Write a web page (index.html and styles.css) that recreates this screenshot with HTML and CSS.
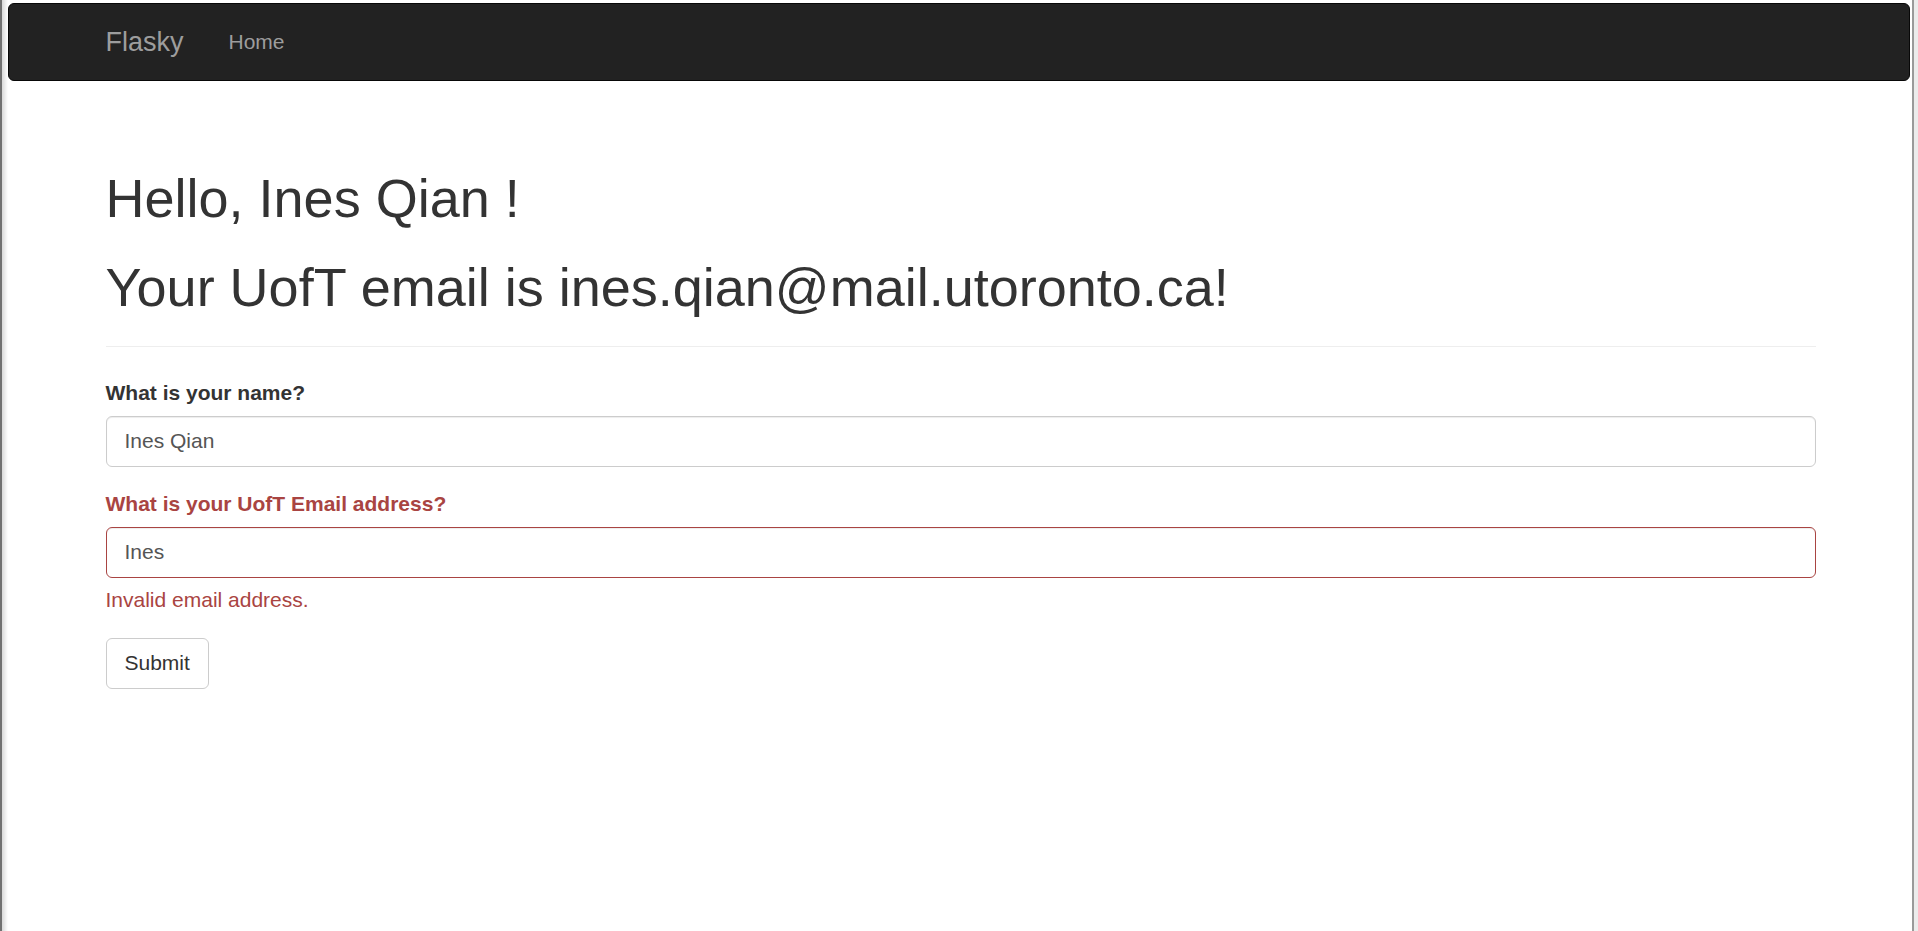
FILE: index.html
```html
<!DOCTYPE html>
<html lang="en">
<head>
<meta charset="utf-8">
<title>Flasky</title>
<link rel="stylesheet" href="styles.css">
</head>
<body>
<nav class="navbar">
  <div class="container nav-inner">
    <a class="brand" href="#">Flasky</a>
    <ul class="nav">
      <li><a href="#">Home</a></li>
    </ul>
  </div>
</nav>
<main class="container main">
  <div class="page-header">
    <h1>Hello, Ines Qian !</h1>
    <h1>Your UofT email is ines.qian@mail.utoronto.ca!</h1>
  </div>
  <form class="form">
    <div class="form-group">
      <label class="label" for="name">What is your name?</label>
      <input class="input" id="name" type="text" value="Ines Qian">
    </div>
    <div class="form-group has-error">
      <label class="label" for="email">What is your UofT Email address?</label>
      <input class="input" id="email" type="text" value="Ines">
      <span class="help-block">Invalid email address.</span>
    </div>
    <button class="btn" type="button">Submit</button>
  </form>
</main>
</body>
</html>
```
FILE: styles.css
```css
* { box-sizing: border-box; }
html {
  background: #ececec;
  min-height: 100%;
}
body {
  margin: 0 4px 0 0;
  min-height: 931px;
  padding: 3px 2px 0 6px;
  border-left: 2px solid #717171;
  border-right: 2px solid #9a9a9a;
  background: linear-gradient(to right, #d9d9d9 0, #f3f3f3 4px, #ffffff 6px);
  font-family: "Liberation Sans", Arial, Helvetica, sans-serif;
  font-size: 21px;
  line-height: 1.42857;
  color: #333;
}
.container {
  width: 1755px;
  margin-left: 75px;
  padding: 0 22.5px;
}
.main {
  display: flow-root;
}
.navbar {
  height: 78px;
  background: #222;
  border: 1px solid #080808;
  border-radius: 6px;
  margin-bottom: 30px;
}
.nav-inner {
  display: flex;
  align-items: flex-start;
  margin-left: 74px;
}
.brand {
  display: block;
  margin-left: -22.5px;
  padding: 22.5px;
  height: 75px;
  font-size: 27px;
  line-height: 30px;
  color: #9d9d9d;
  text-decoration: none;
}
.nav {
  display: flex;
  list-style: none;
  margin: 0;
  padding: 0;
}
.nav a {
  display: block;
  padding: 22.5px;
  line-height: 30px;
  font-size: 21px;
  color: #9d9d9d;
  text-decoration: none;
}
.page-header {
  margin: 58px 0 31px;
  padding-bottom: 13.5px;
  border-bottom: 1px solid #eee;
}
.page-header h1 {
  font-size: 54px;
  font-weight: 500;
  line-height: 1.1;
  margin: 30px 0 15px;
  color: #333;
}
.page-header h1:first-child { margin-top: 0; }
.form-group {
  margin-bottom: 22.5px;
}
.label {
  display: inline-block;
  max-width: 100%;
  margin-bottom: 7.5px;
  font-weight: bold;
}
.input {
  display: block;
  width: 100%;
  height: 51px;
  padding: 9px 18px;
  font-family: inherit;
  font-size: 21px;
  line-height: 1.42857;
  color: #555;
  background: #fff;
  border: 1px solid #ccc;
  border-radius: 6px;
  box-shadow: inset 0 1px 1px rgba(0,0,0,.075);
}
.has-error .label,
.has-error .help-block { color: #a94442; }
.has-error .input {
  border-color: #a94442;
}
.help-block {
  display: block;
  margin-top: 7.5px;
  margin-bottom: 15px;
}
.btn {
  display: inline-block;
  height: 51px;
  padding: 9px 18px;
  font-family: inherit;
  font-size: 21px;
  line-height: 1.42857;
  color: #333;
  background: #fff;
  border: 1px solid #ccc;
  border-radius: 6px;
}
```
